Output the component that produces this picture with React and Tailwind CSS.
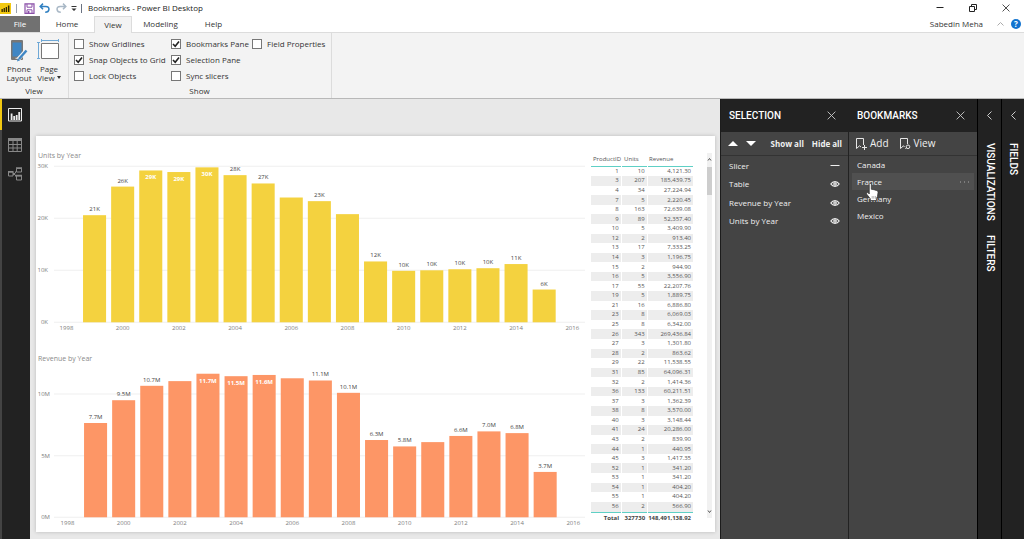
const RIBBON_OPTIONS = [
  [
    { label: 'Show Gridlines', on: false },
    { label: 'Snap Objects to Grid', on: true },
    { label: 'Lock Objects', on: false },
  ],
  [
    { label: 'Bookmarks Pane', on: true },
    { label: 'Selection Pane', on: true },
    { label: 'Sync slicers', on: false },
  ],
  [{ label: 'Field Properties', on: false }],
];

// [year, value, label, label drawn inside the bar]
const UNITS = [
  [1999, 20.6, '21K'],
  [2000, 26.1, '26K'],
  [2001, 29.2, '29K', true],
  [2002, 28.9, '29K', true],
  [2003, 29.8, '30K', true],
  [2004, 28.3, '28K'],
  [2005, 26.7, '27K'],
  [2006, 24],
  [2007, 23.3, '23K'],
  [2008, 20.8],
  [2009, 11.7, '12K'],
  [2010, 9.9, '10K'],
  [2011, 10, '10K'],
  [2012, 10.2, '10K'],
  [2013, 10.4, '10K'],
  [2014, 11.2, '11K'],
  [2015, 6.3, '6K'],
];

const REVENUE = [
  [1999, 7.65, '7.7M'],
  [2000, 9.5, '9.5M'],
  [2001, 10.67, '10.7M'],
  [2002, 11.05],
  [2003, 11.65, '11.7M', true],
  [2004, 11.45, '11.5M', true],
  [2005, 11.55, '11.6M', true],
  [2006, 11.28],
  [2007, 11.1, '11.1M'],
  [2008, 10.1, '10.1M'],
  [2009, 6.27, '6.3M'],
  [2010, 5.75, '5.8M'],
  [2011, 6.1],
  [2012, 6.6, '6.6M'],
  [2013, 6.97, '7.0M'],
  [2014, 6.83, '6.8M'],
  [2015, 3.68, '3.7M'],
];

const PRODUCTS = [
  ['1', '10', '4,121.30'],
  ['3', '207', '185,439.75'],
  ['4', '34', '27,224.94'],
  ['7', '5', '2,220.45'],
  ['8', '163', '72,639.08'],
  ['9', '89', '52,357.40'],
  ['10', '5', '3,409.90'],
  ['12', '2', '913.40'],
  ['13', '17', '7,333.25'],
  ['14', '3', '1,196.75'],
  ['15', '2', '944.90'],
  ['16', '5', '3,556.90'],
  ['17', '55', '22,207.76'],
  ['19', '5', '1,889.75'],
  ['21', '16', '6,886.80'],
  ['23', '8', '6,069.03'],
  ['25', '8', '6,342.00'],
  ['26', '343', '269,436.84'],
  ['27', '3', '1,301.80'],
  ['28', '2', '863.62'],
  ['29', '22', '11,538.55'],
  ['31', '85', '64,096.31'],
  ['32', '2', '1,414.36'],
  ['36', '133', '60,211.51'],
  ['37', '3', '1,362.39'],
  ['38', '8', '3,570.00'],
  ['40', '3', '3,148.44'],
  ['41', '24', '20,286.00'],
  ['43', '2', '839.90'],
  ['44', '1', '440.95'],
  ['45', '3', '1,417.35'],
  ['52', '1', '341.20'],
  ['53', '1', '341.20'],
  ['54', '1', '404.20'],
  ['55', '1', '404.20'],
  ['56', '2', '566.90'],
];

const LAYERS = [
  { name: 'Slicer', visible: false },
  { name: 'Table', visible: true },
  { name: 'Revenue by Year', visible: true },
  { name: 'Units by Year', visible: true },
];

const BOOKMARKS = ['Canada', 'France', 'Germany', 'Mexico'];

const CloseIcon = ({ className }) => (
  <svg viewBox="0 0 10 10" className={className} fill="none" stroke="currentColor">
    <path d="M.7.7l8.6 8.6M9.3.7L.7 9.3" />
  </svg>
);

const TitleBar = () => (
  <header className="flex h-4 items-center bg-white">
    <svg viewBox="0 0 12 12" className="mt-px w-3">
      <path fill="#f2c811" d="M0 0h11v11H0z" />
      <path fill="#2b2300" d="M1.5 6h1.3v3H1.5zM3.6 5h1.3v4H3.6zM5.7 4h1.3v5H5.7zM7.9 2.5h1.5V9H7.9z" />
    </svg>
    <span className="ml-1 h-[9px] w-px bg-gray-400" />
    <button type="button" aria-label="Save" className="ml-[7px]">
      <svg viewBox="0 0 11 11" className="w-[11px]" fill="none" stroke="#8a4fa8">
        <path strokeWidth="1.2" d="M1 .8h9v9.6H1z" />
        <path d="M3 1v3.2h5V1M3 10V6.8h5V10" />
        <path fill="#8a4fa8" stroke="none" d="M4 8h1.4v2H4z" />
      </svg>
    </button>
    <button type="button" aria-label="Undo" className="ml-1">
      <svg viewBox="0 0 12 10" className="w-3" fill="none" stroke="#2f7fc1" strokeWidth="1.5">
        <path d="M4 .6L1.2 3.4 4 6.2M1.5 3.4h5.3c4.6 0 4 5.8-.6 5.8" />
      </svg>
    </button>
    <button type="button" aria-label="Redo" className="ml-1">
      <svg viewBox="0 0 12 10" className="w-3" fill="none" stroke="#a9b8c6" strokeWidth="1.5">
        <path d="M8 .6l2.8 2.8L8 6.2M10.5 3.4H5.2C.6 3.4 1.2 9.2 5.8 9.2" />
      </svg>
    </button>
    <button type="button" aria-label="Customize toolbar" className="ml-1">
      <svg viewBox="0 0 6 6" className="mt-0.5 w-1.5">
        <path fill="#333" d="M.5 0h5v1h-5zM.5 2.4h5L3 5z" />
      </svg>
    </button>
    <span className="ml-1 h-[9px] w-px bg-gray-500" />
    <h1 className="ml-1.5 text-[8px] text-[#222]">Bookmarks - Power BI Desktop</h1>
    <div className="ml-auto flex items-center gap-[25px] pr-3.5 text-[#222]">
      <button type="button" aria-label="Minimize">
        <svg viewBox="0 0 8 8" className="w-2" stroke="currentColor">
          <path d="M.5 3.5h7" />
        </svg>
      </button>
      <button type="button" aria-label="Restore">
        <svg viewBox="0 0 8 8" className="w-2" fill="none" stroke="currentColor">
          <path d="M.5 2.5h5v5h-5zM2.5 2.5v-2h5v5h-2" />
        </svg>
      </button>
      <button type="button" aria-label="Close">
        <CloseIcon className="w-2" />
      </button>
    </div>
  </header>
);

const Tabs = () => (
  <nav className="flex h-[17px] items-stretch border-b border-[#dcdcdc] bg-white text-[8px] text-[#333]">
    <button type="button" className="w-10 bg-[#717171] text-white">File</button>
    <button type="button" className="w-[54px]">Home</button>
    <button type="button" className="-mb-px w-[38px] border border-b-0 border-[#dcdcdc] bg-[#f3f3f3]">View</button>
    <button type="button" className="w-[57px]">Modeling</button>
    <button type="button" className="w-[49px]">Help</button>
    <div className="ml-auto flex items-center pr-[3px]">
      <span>Sabedin Meha</span>
      <button type="button" aria-label="Collapse ribbon" className="ml-3.5">
        <svg viewBox="0 0 7 4" className="w-[7px]" fill="none" stroke="#aaa">
          <path d="M.5 3.5l3-3 3 3" />
        </svg>
      </button>
      <button type="button" aria-label="Help" className="ml-[7px] size-2.5 rounded-full bg-[#1173cf] text-[8px] leading-[10px] font-bold text-white">
        ?
      </button>
    </div>
  </nav>
);

const RibbonCheck = ({ label, on }) => (
  <label className="flex h-4 items-center gap-[5px] whitespace-nowrap">
    <span className="grid size-[10px] place-items-center">
      <input type="checkbox" defaultChecked={on} className="peer col-start-1 row-start-1 size-[10px] appearance-none border border-[#777] bg-white" />
      <svg viewBox="0 0 8 8" className="pointer-events-none invisible col-start-1 row-start-1 w-2 peer-checked:visible" fill="none" stroke="#222" strokeWidth="1.6">
        <path d="M1 4l2.2 2.3L7 1.5" />
      </svg>
    </span>
    {label}
  </label>
);

const Ribbon = () => (
  <section className="flex border-b border-[#b8b8b8] bg-[#f3f3f3] text-[8px] text-[#333]">
    <div className="flex w-[69px] flex-col border-r border-[#dcdcdc] pt-1.5">
      <div className="flex px-1">
        <button type="button" className="flex w-[30px] flex-col items-center leading-[9px]">
          <svg viewBox="0 0 18 24" className="mb-px h-6">
            <rect x="1" y="1" width="12" height="20" rx="1" fill="#777" />
            <path fill="#3f86c4" d="M2.5 3.5h9v14h-9z" />
            <path fill="#ddd" d="M5.5 18.8h3v1h-3z" />
            <path stroke="#f3f3f3" strokeWidth="4" d="M16.5 11L8 20.5" />
            <path stroke="#3f86c4" strokeWidth="2.4" d="M16.5 11.5L9 20" />
            <path fill="#3f86c4" d="M7 22.5l.8-3.3 2.4 2z" />
          </svg>
          Phone Layout
        </button>
        <button type="button" className="flex w-[30px] flex-col items-center leading-[9px]">
          <svg viewBox="0 0 24 24" className="mb-px h-6" fill="none">
            <path stroke="#6fa8d6" d="M4 1.5h18M4.5 0v3M21.5 0v3M1.5 3v17M0 3.5h3M0 19.5h3" />
            <path fill="#fff" stroke="#777" d="M4.5 4.5h17v15h-17z" />
          </svg>
          Page
          <span className="flex items-center gap-0.5">
            View
            <svg viewBox="0 0 4 3" className="w-1">
              <path fill="#333" d="M0 0h4L2 3z" />
            </svg>
          </span>
        </button>
      </div>
      <span className="mt-[3px] text-center leading-[12px]">View</span>
    </div>
    <div className="flex w-[263px] flex-col border-r border-[#dcdcdc] pt-[3px] pl-[5px]">
      <div className="grid grid-cols-[97px_81px_1fr]">
        {RIBBON_OPTIONS.map((column) => (
          <div key={column[0].label}>
            {column.map((option) => (
              <RibbonCheck key={option.label} {...option} />
            ))}
          </div>
        ))}
      </div>
      <span className="mt-px mb-px pr-1.5 text-center leading-[12px]">Show</span>
    </div>
  </section>
);

const ViewRail = () => (
  <nav className="flex w-[30px] shrink-0 flex-col border-l-2 border-[#444] bg-[#222]">
    <button type="button" aria-label="Report" className="-ml-0.5 flex h-[31px] items-center border-l-2 border-[#f2c811] pl-1.5">
      <svg viewBox="0 0 14 14" className="w-3.5" fill="none" stroke="#eee">
        <path d="M.5.5h13V13H.5z" />
        <path strokeWidth="1.8" d="M3.6 12V5.5M6.2 12V8M8.7 12V7M11.2 12V4" />
      </svg>
    </button>
    <button type="button" aria-label="Data" className="flex h-[29px] items-center pl-1.5">
      <svg viewBox="0 0 14 14" className="w-3.5" fill="none" stroke="#888">
        <path d="M.5 2h13v11.5H.5zM.5 6.5h13M.5 10h13M5 3v10.5M9.2 3v10.5" />
        <path strokeWidth="3" d="M0 1.5h14" />
      </svg>
    </button>
    <button type="button" aria-label="Model" className="flex h-[29px] items-center pl-1.5">
      <svg viewBox="0 0 14 14" className="w-3.5" fill="none" stroke="#888">
        <path d="M.5 5H5v4H.5zM8.5 1.500h5V5h-5zM8.5 9h5v4h-5zM5 6.500h2l1.500-3M5 7.500h2l1.500 3" />
        <path strokeWidth="1.6" d="M0 4.8h5.500M8 1h6M8 8.500h6" />
      </svg>
    </button>
  </nav>
);

const BarChart = ({ title, data, color, step, unit, suffix, top, height, firstYearX }) => {
  const yearX = (year) => firstYearX + (year - 1998) * 28.05;
  const baseline = height - 13;
  const y = (value) => baseline - value * unit;
  const ticks = [0, 1, 2, 3].map((n) => n * step).filter((v) => v <= top);

  return (
    <figure>
      <figcaption className="pl-0.5 text-[7px] leading-[9px] text-[#8a8a8a]">{title}</figcaption>
      <svg viewBox={`0 0 554 ${height}`} className="block w-full overflow-visible text-[6px]">
        {ticks.map((tick) => (
          <g key={tick}>
            <path stroke="#efefef" d={`M18 ${y(tick)}H548`} />
            <text x={suffix === 'K' ? 12 : 14} y={y(tick) + 2} textAnchor="end" fill="#7d7d7d">
              {tick}
              {suffix}
            </text>
          </g>
        ))}
        {data.map(([year, value, label, inside]) => (
          <g key={year}>
            <rect x={yearX(year) - 11.5} y={y(value)} width="23" height={value * unit} fill={color} />
            {label && (
              <text
                x={yearX(year)}
                y={y(value) + (inside ? 9 : -4)}
                textAnchor="middle"
                fontWeight={inside ? 700 : 400}
                fill={inside ? '#fff' : '#444'}
              >
                {label}
              </text>
            )}
          </g>
        ))}
        {[1998, 2000, 2002, 2004, 2006, 2008, 2010, 2012, 2014, 2016].map((year) => (
          <text key={year} x={yearX(year)} y={baseline + 8} textAnchor="middle" fill="#7d7d7d">
            {year}
          </text>
        ))}
      </svg>
    </figure>
  );
};

const ProductTable = () => (
  <table className="h-full w-[102px] border-collapse text-right text-[6px] leading-[9px] text-[#555]">
    <thead>
      <tr className="border-b border-[#5fd0c5] text-left">
        <th scope="col" className="h-[13px] w-[30px] pl-0.5 font-normal">ProductID</th>
        <th scope="col" className="w-[26px] pl-[3px] font-normal">Units</th>
        <th scope="col" className="pl-0.5 font-normal">Revenue</th>
      </tr>
    </thead>
    <tbody>
      {PRODUCTS.map(([id, units, revenue]) => (
        <tr key={id} className="even:bg-[#ededed]">
          <td className="border-r border-white pr-0.5">{id}</td>
          <td className="border-r border-white pr-0.5">{units}</td>
          <td className="pr-0.5">{revenue}</td>
        </tr>
      ))}
    </tbody>
    <tfoot>
      <tr className="border-t border-[#5fd0c5] font-bold text-[#444]">
        <td className="h-3 pr-0.5">Total</td>
        <td className="pr-0.5">327730</td>
        <td className="pr-0.5">148,491,138.92</td>
      </tr>
    </tfoot>
  </table>
);

const ScrollBar = () => (
  <div className="mb-1.5 ml-auto flex w-[5px] flex-col items-center bg-[#f1f1f1]">
    <svg viewBox="0 0 5 14" className="w-[5px]" fill="none" stroke="#555">
      <path d="M1 7.5l1.5-2L4 7.5" />
    </svg>
    <div className="h-7 w-full bg-[#cdcdcd]" />
    <svg viewBox="0 0 5 14" className="mt-auto w-[5px]" fill="none" stroke="#555">
      <path d="M1 6.5l1.5 2L4 6.5" />
    </svg>
  </div>
);

const ReportPage = () => (
  <main className="flex min-w-0 flex-1 flex-col bg-[#e8e8e8] pt-[37px] pr-[5px] pb-[7px] pl-1.5">
    <div className="flex flex-1 bg-white shadow-[0_0_4px_rgba(0,0,0,0.2)]">
      <div className="flex min-w-0 flex-1 flex-col gap-[19px] pt-[15px]">
        <BarChart title="Units by Year" data={UNITS} color="#f4d23f" step={10} unit={5.19} suffix="K" top={30} height={175} firstYearX={30.4} />
        <BarChart title="Revenue by Year" data={REVENUE} color="#fd9666" step={5} unit={12.3} suffix="M" top={10} height={167} firstYearX={31.4} />
      </div>
      <div className="flex w-[124px] shrink-0 pt-[17px] pr-[3px] pb-2">
        <ProductTable />
        <ScrollBar />
      </div>
    </div>
  </main>
);

const PaneHeader = ({ title }) => (
  <div className="flex h-[33px] items-center justify-between bg-[#222] pr-3 pl-2">
    <h2 className="font-['Roboto',sans-serif] text-[10px] font-medium text-white">{title}</h2>
    <button type="button" aria-label={`Close ${title}`}>
      <CloseIcon className="w-[9px] text-[#ccc]" />
    </button>
  </div>
);

const SelectionPane = () => (
  <aside className="w-32 shrink-0 border-l border-[#1c1c1c] bg-[#444] text-[8px] text-[#f0f0f0]">
    <PaneHeader title="SELECTION" />
    <div className="flex h-6 items-center border-b border-[#333] pr-1.5 pl-[7px] font-bold">
      <button type="button" aria-label="Move up">
        <svg viewBox="0 0 10 5" className="w-2.5">
          <path fill="#fff" d="M0 5h10L5 0z" />
        </svg>
      </button>
      <button type="button" aria-label="Move down" className="ml-2">
        <svg viewBox="0 0 10 5" className="w-2.5">
          <path fill="#fff" d="M0 0h10L5 5z" />
        </svg>
      </button>
      <button type="button" className="ml-auto">Show all</button>
      <button type="button" className="ml-2">Hide all</button>
    </div>
    <ul>
      {LAYERS.map(({ name, visible }) => (
        <li key={name} className="flex h-[18px] items-center justify-between px-2 odd:h-[19px]">
          {name}
          <button type="button" aria-label={`Toggle ${name}`}>
            <svg viewBox="0 0 10 8" className="w-2.5" fill="none" stroke="#f0f0f0">
              {visible ? (
                <>
                  <path strokeWidth="1.2" d="M.8 4C3 .8 7 .8 9.2 4 7 7.2 3 7.2.8 4z" />
                  <circle cx="5" cy="4" r="1.2" strokeWidth="1.2" />
                </>
              ) : (
                <path d="M.5 3.5h9" />
              )}
            </svg>
          </button>
        </li>
      ))}
    </ul>
  </aside>
);

const HandCursor = () => (
  <svg viewBox="0 0 12 17" className="pointer-events-none absolute top-2.5 left-3.5 w-[13px]">
    <path
      fill="#fff"
      stroke="#333"
      strokeWidth=".7"
      d="M3 1.3c0-1.2 1.900-1.200 1.900 0v4.500l1.600.2 1.600.4 1.600.5c1 .3 1.500 1 1.400 2l-.5 3.500-1 1.900v1.900H4v-1.600L.7 10.400C0 9.300 1.300 8.300 2.200 9.200l.8.9z"
    />
    <path stroke="#777" strokeWidth=".5" d="M5.7 12v2.500M7.200 12v2.500M8.700 12v2.500" />
  </svg>
);

const BookmarksPane = () => (
  <aside className="w-[129px] shrink-0 border-l border-[#222] bg-[#444] text-[8px] text-[#f0f0f0]">
    <PaneHeader title="BOOKMARKS" />
    <div className="flex h-6 items-center gap-2.5 border-b border-[#333] pl-1.5 text-[10px]">
      <button type="button" className="flex items-center gap-[3px]">
        <svg viewBox="0 0 12 12" className="w-3" fill="none" stroke="#e6e6e6">
          <path d="M6 9L4.5 7.8l-3 2.700V.5h7V7M9.500 7v5M7 9.500h5" />
        </svg>
        Add
      </button>
      <button type="button" className="flex items-center gap-[3px]">
        <svg viewBox="0 0 12 12" className="w-3" fill="none" stroke="#e6e6e6">
          <path d="M5.500 9l-1-1.200-3 2.700V.5h7V6M6.500 11l1-1.500" />
          <circle cx="9" cy="8.8" r="1.8" />
        </svg>
        View
      </button>
    </div>
    <ul className="px-[3px]">
      {BOOKMARKS.map((name) => (
        <li
          key={name}
          className={
            name === 'France'
              ? 'relative flex h-[17px] items-center justify-between bg-[#505050] px-[5px]'
              : 'flex h-[17px] items-center px-[5px]'
          }
        >
          {name}
          {name === 'France' && (
            <>
              <button type="button" aria-label="More options">
                <svg viewBox="0 0 9 2" className="w-[9px]">
                  <path fill="#aaa" d="M0 .5h1v1H0zM4 .5h1v1H4zM8 .5h1v1H8z" />
                </svg>
              </button>
              <HandCursor />
            </>
          )}
        </li>
      ))}
    </ul>
  </aside>
);

const CollapsedPane = ({ titles }) => (
  <aside className="flex w-[23px] shrink-0 flex-col items-center border-l border-black bg-[#222] pt-3 text-white first-of-type:w-6">
    <button type="button" aria-label="Expand">
      <svg viewBox="0 0 5 9" className="block w-[5px]" fill="none" stroke="#ccc">
        <path d="M4.5.5l-4 4 4 4" />
      </svg>
    </button>
    <div className="mt-[23px] flex flex-col items-center gap-3.5">
      {titles.map((title) => (
        <h2 key={title} className="font-['Roboto',sans-serif] text-[10px] leading-[12px] font-medium [writing-mode:vertical-rl]">
          {title}
        </h2>
      ))}
    </div>
  </aside>
);

const App = () => (
  <div className="flex min-h-screen flex-col bg-[#e8e8e8] font-['Open_Sans','Noto_Sans',sans-serif]">
    <TitleBar />
    <Tabs />
    <Ribbon />
    <div className="flex flex-1">
      <ViewRail />
      <ReportPage />
      <SelectionPane />
      <BookmarksPane />
      <div className="flex shrink-0">
        <CollapsedPane titles={['VISUALIZATIONS', 'FILTERS']} />
        <CollapsedPane titles={['FIELDS']} />
      </div>
    </div>
  </div>
);

export default App;
